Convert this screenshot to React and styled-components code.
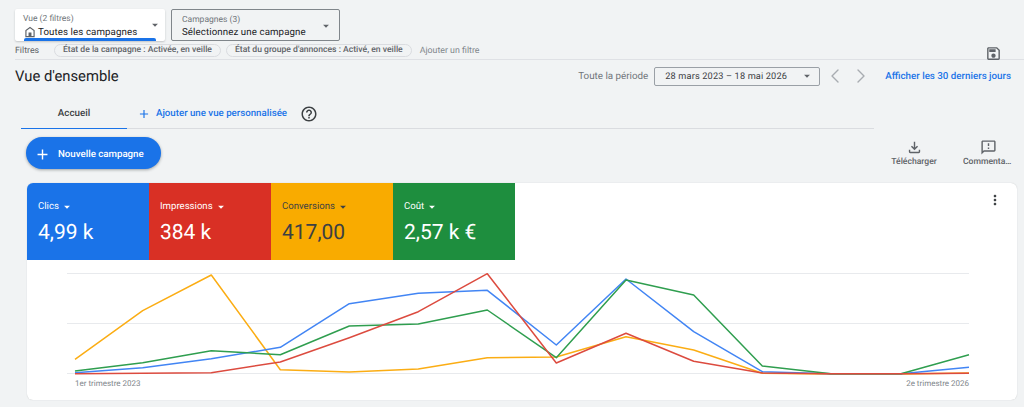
import React from 'react';
import styled, { createGlobalStyle } from 'styled-components';
import { ChevronLeft, ChevronRight } from 'lucide-react';

const CARET = 'M7 10l5 5 5-5z';
const PLUS = 'M19 13h-6v6h-2v-6H5v-2h6V5h2v6h6v2z';
const HOME = 'M12 3L4 9v12h16V9l-8-6zm6 16H6v-9l6-4.5 6 4.5v9zM9.5 13h5v6h-5z';
const HELP = 'M11 18h2v-2h-2v2zm1-16C6.48 2 2 6.48 2 12s4.48 10 10 10 10-4.48 10-10S17.52 2 12 2zm0 18c-4.41 0-8-3.59-8-8s3.59-8 8-8 8 3.59 8 8-3.59 8-8 8zm0-14c-2.21 0-4 1.79-4 4h2c0-1.1.9-2 2-2s2 .9 2 2c0 2-3 1.75-3 5h2c0-2.25 3-2.5 3-5 0-2.21-1.79-4-4-4z';
const SAVE = 'M17 3H5c-1.11 0-2 .9-2 2v14c0 1.1.89 2 2 2h14c1.1 0 2-.9 2-2V7l-4-4zm2 16H5V5h11.17L19 7.83V19zm-7-7c-1.66 0-3 1.34-3 3s1.34 3 3 3 3-1.34 3-3-1.34-3-3-3zM6 6h9v4H6z';
const DOWNLOAD = 'M18 15v3H6v-3H4v3c0 1.1.9 2 2 2h12c1.1 0 2-.9 2-2v-3h-2zm-1-4l-1.41-1.41L13 12.17V4h-2v8.17L8.41 9.59 7 11l5 5 5-5z';
const FEEDBACK = 'M20 2H4c-1.1 0-1.99.9-1.99 2L2 22l4-4h14c1.1 0 2-.9 2-2V4c0-1.1-.9-2-2-2zm0 14H5.17L4 17.17V4h16v12zm-9-4h2v2h-2zm0-6h2v4h-2z';
const MORE = 'M12 8c1.1 0 2-.9 2-2s-.9-2-2-2-2 .9-2 2 .9 2 2 2zm0 2c-1.1 0-2 .9-2 2s.9 2 2 2 2-.9 2-2-.9-2-2-2zm0 6c-1.1 0-2 .9-2 2s.9 2 2 2 2-.9 2-2-.9-2-2-2z';

const GlobalStyle = createGlobalStyle`
  html, body { margin: 0; padding: 0; background: #f1f3f4; }
  body {
    font-family: Roboto, "Liberation Sans", sans-serif;
    color: #3c4043;
    text-rendering: geometricPrecision;
  }
`;

const Page = styled.div`
  width: 1024px;
  height: 407px;
  overflow: hidden;
  display: flex;
  flex-direction: column;
`;

const Svg = styled.svg`
  display: block;
  flex: none;
  fill: currentColor;
`;

function Icon({ d, size = 16, color, className }) {
  return (
    <Svg viewBox="0 0 24 24" width={size} height={size} style={color ? { color } : undefined} className={className}>
      <path d={d} />
    </Svg>
  );
}

const TopBar = styled.div`
  display: flex;
  gap: 6px;
  padding: 9px 0 0 15px;
`;

const Selector = styled.div`
  position: relative;
  box-sizing: border-box;
  height: 32px;
  width: ${p => p.$width}px;
  padding: 5px 0 0 ${p => p.$inset}px;
  border-radius: 2px;
  background: ${p => (p.$active ? '#fff' : 'transparent')};
  border: ${p => (p.$active ? 'none' : '1px solid #80868b')};
  box-shadow: ${p => (p.$active ? '0 1px 2px rgba(60,64,67,.25)' : 'none')};
`;

const SelectorLabel = styled.div`
  font-size: 8.5px;
  line-height: 10px;
  color: #70757a;
`;

const SelectorValue = styled.div`
  display: flex;
  align-items: center;
  gap: 1px;
  margin-top: 1px;
  font-size: 9.7px;
  line-height: 13px;
  color: #202124;
  letter-spacing: 0.1px;
  white-space: nowrap;
`;

const SelectorCaret = styled.div`
  position: absolute;
  top: 9px;
  right: ${p => p.$right}px;
  color: #5f6368;
`;

const ActiveBar = styled.div`
  position: absolute;
  left: 9px;
  right: 9px;
  bottom: 0;
  height: 3px;
  border-radius: 2px 2px 0 0;
  background: #1a73e8;
`;

const FilterRow = styled.div`
  display: flex;
  align-items: center;
  box-sizing: border-box;
  height: 16px;
  margin: 3px 0 0 15px;
  padding-bottom: 2px;
  border-bottom: 1px solid #dfe1e5;
`;

const FilterLabel = styled.span`
  font-size: 8.8px;
  color: #5f6368;
  width: 39px;
`;

const Chip = styled.span`
  box-sizing: border-box;
  height: 13px;
  line-height: 11px;
  margin-right: 5px;
  padding: 0 8px;
  border: 1px solid #dadce0;
  border-radius: 7px;
  font-size: 8.6px;
  font-weight: 500;
  color: #5f6368;
  white-space: nowrap;
`;

const AddFilter = styled.span`
  margin-left: 3px;
  font-size: 8.8px;
  color: #80868b;
`;

const SaveButton = styled.div`
  margin: 5px 22px 0 auto;
  color: #5f6368;
`;

const PeriodRow = styled.div`
  display: flex;
  align-items: center;
  height: 32px;
  padding: 0 13px 0 15px;
`;

const Title = styled.h1`
  margin: 0;
  font-size: 14.8px;
  font-weight: 400;
  color: #202124;
`;

const PeriodLabel = styled.span`
  margin-left: auto;
  font-size: 9.8px;
  color: #70757a;
`;

const DateBox = styled.div`
  display: flex;
  align-items: center;
  justify-content: space-between;
  box-sizing: border-box;
  width: 166px;
  height: 19px;
  margin-left: 6px;
  padding: 0 5px 0 10px;
  border: 1px solid #9aa0a6;
  border-radius: 2px;
  font-size: 9.2px;
  letter-spacing: 0.15px;
  color: #3c4043;
  white-space: nowrap;
`;

const Arrow = styled.div`
  display: flex;
  margin-left: ${p => p.$gap}px;
  color: #a8acb1;
`;

const BlueLink = styled.span`
  font-size: 9.7px;
  font-weight: 500;
  color: #1a73e8;
  white-space: nowrap;
`;

const PeriodLink = styled(BlueLink)`
  margin-left: 12px;
  font-size: 9.78px;
`;

const TabBar = styled.div`
  display: flex;
  align-items: stretch;
  box-sizing: border-box;
  width: 853px;
  height: 32px;
  margin: 5px 0 0 21px;
  padding-top: 2px;
  border-bottom: 1px solid #dadce0;
`;

const Tab = styled.div`
  display: flex;
  align-items: center;
  justify-content: center;
  box-sizing: border-box;
  width: 106px;
  border-bottom: 1px solid #1a73e8;
  margin-bottom: -1px;
  font-size: 9.8px;
  font-weight: 500;
  color: #3c4043;
`;

const AddView = styled.div`
  display: flex;
  align-items: center;
  gap: 5px;
  margin-left: 10px;
  color: #1a73e8;
`;

const HelpButton = styled.div`
  display: flex;
  align-items: center;
  margin-left: 13px;
  color: #3c4043;
`;

const ActionRow = styled.div`
  display: flex;
  align-items: flex-start;
  height: 54px;
  padding-top: 8px;
  box-sizing: border-box;
`;

const NewButton = styled.button`
  display: flex;
  align-items: center;
  gap: 7px;
  box-sizing: border-box;
  width: 135px;
  height: 32px;
  margin-left: 26px;
  padding: 2px 0 0 8px;
  border: none;
  border-radius: 16px;
  background: #1a73e8;
  color: #fff;
  font-family: inherit;
  font-size: 9.7px;
  font-weight: 500;
  white-space: nowrap;
  text-rendering: geometricPrecision;
  box-shadow: 0 1px 3px rgba(60, 64, 67, .45);
`;

const Actions = styled.div`
  display: flex;
  gap: 2px;
  margin-left: auto;
`;

const Action = styled.div`
  box-sizing: border-box;
  width: 72px;
  padding: 2px 11px 0;
  display: flex;
  flex-direction: column;
  align-items: center;
  gap: 1px;
  color: #5f6368;
`;

const ActionText = styled.span`
  display: block;
  width: 100%;
  font-size: 8.6px;
  font-weight: 500;
  line-height: 10px;
  text-align: center;
  white-space: nowrap;
  overflow: hidden;
  text-overflow: ellipsis;
`;

const Card = styled.section`
  box-sizing: border-box;
  height: 217px;
  margin: 0 7px 0 27px;
  border-radius: 6px;
  background: #fff;
  overflow: hidden;
  box-shadow: 0 0 1px rgba(60, 64, 67, .3);
`;

const CardHeader = styled.div`
  display: flex;
  height: 77px;
`;

const Tile = styled.div`
  box-sizing: border-box;
  width: 122px;
  padding: 17px 0 0 11px;
  background: ${p => p.$bg};
  color: ${p => p.$fg};
`;

const TileLabel = styled.div`
  display: flex;
  align-items: center;
  gap: 1px;
  font-size: 9.6px;
  line-height: 14px;
`;

const TileValue = styled.div`
  margin-top: 6px;
  font-size: 21px;
  line-height: 26px;
`;

const MoreButton = styled.div`
  margin: 9px 14px 0 auto;
  color: #3c4043;
`;

const ChartSvg = styled.svg`
  display: block;
`;

const AxisLabels = styled.div`
  display: flex;
  justify-content: space-between;
  width: 894px;
  margin: 0 0 0 48px;
  font-size: 8px;
  color: #80868b;
`;

const series = [
  { color: '#fbad14', points: [[75,359.3],[142.7,310.7],[211.3,275],[280.3,369.7],[349.3,372],[418.3,369],[487.3,357.7],[556.3,357],[626,336.7],[693.7,350],[762.3,373.3],[831,374],[901,374],[969,373]] },
  { color: '#4285f4', points: [[75,372.7],[142.7,367.7],[211.3,358.7],[280.3,347.3],[349.3,303.7],[418.3,293.3],[487.3,290.3],[556.3,345],[626,279],[693.7,331.7],[762.3,371.7],[831,373.7],[901,373.7],[969,367.3]] },
  { color: '#2f9e4f', points: [[75,371],[142.7,362.7],[211.3,350.7],[280.3,354.7],[349.3,326],[418.3,324],[487.3,310],[556.3,357.7],[626,280],[693.7,295],[762.3,366],[831,373.7],[901,373.7],[969,354.7]] },
  { color: '#dc4b3f', points: [[75,373.7],[142.7,373.3],[211.3,372.7],[280.3,362],[349.3,337.7],[418.3,311.7],[487.3,273.7],[556.3,363],[626,333.3],[693.7,361.3],[762.3,373],[831,373.7],[901,373.7],[969,373.3]] },
];

// chart coordinates are page pixels, the viewBox moves them into the card
function Chart() {
  return (
    <ChartSvg width="990" height="119" viewBox="27 260 990 119">
      {[273.5, 323.5, 373.5].map(y => (
        <line key={y} x1="67" x2="969" y1={y} y2={y} stroke="#e8eaed" strokeWidth="1" />
      ))}
      {series.map(s => (
        <polyline
          key={s.color}
          points={s.points.map(p => p.join(',')).join(' ')}
          fill="none"
          stroke={s.color}
          strokeWidth="1.5"
          strokeLinejoin="round"
        />
      ))}
    </ChartSvg>
  );
}

const tiles = [
  { label: 'Clics', value: '4,99 k', bg: '#1a73e8', fg: '#fff' },
  { label: 'Impressions', value: '384 k', bg: '#d93025', fg: '#fff' },
  { label: 'Conversions', value: '417,00', bg: '#f9ab00', fg: '#3c4043' },
  { label: 'Coût', value: '2,57 k €', bg: '#1e8e3e', fg: '#fff' },
];

export default function App() {
  return (
    <Page>
      <GlobalStyle />
      <TopBar>
        <Selector $width={150} $inset={8} $active>
          <SelectorLabel>Vue (2 filtres)</SelectorLabel>
          <SelectorValue>
            <Icon d={HOME} size={14} color="#5f6368" />
            Toutes les campagnes
          </SelectorValue>
          <SelectorCaret $right={3}><Icon d={CARET} size={14} /></SelectorCaret>
          <ActiveBar />
        </Selector>
        <Selector $width={169} $inset={10}>
          <SelectorLabel>Campagnes (3)</SelectorLabel>
          <SelectorValue>Sélectionnez une campagne</SelectorValue>
          <SelectorCaret $right={6}><Icon d={CARET} size={14} /></SelectorCaret>
        </Selector>
      </TopBar>

      <FilterRow>
        <FilterLabel>Filtres</FilterLabel>
        <Chip>État de la campagne : Activée, en veille</Chip>
        <Chip>État du groupe d'annonces : Activé, en veille</Chip>
        <AddFilter>Ajouter un filtre</AddFilter>
        <SaveButton><Icon d={SAVE} size={17} /></SaveButton>
      </FilterRow>

      <PeriodRow>
        <Title>Vue d'ensemble</Title>
        <PeriodLabel>Toute la période</PeriodLabel>
        <DateBox>
          28 mars 2023 – 18 mai 2026
          <Icon d={CARET} size={14} color="#5f6368" />
        </DateBox>
        <Arrow $gap={3}><ChevronLeft size={24} strokeWidth={1.4} /></Arrow>
        <Arrow $gap={2}><ChevronRight size={24} strokeWidth={1.4} /></Arrow>
        <PeriodLink>Afficher les 30 derniers jours</PeriodLink>
      </PeriodRow>

      <TabBar>
        <Tab>Accueil</Tab>
        <AddView>
          <Icon d={PLUS} size={14} />
          <BlueLink>Ajouter une vue personnalisée</BlueLink>
        </AddView>
        <HelpButton><Icon d={HELP} size={18} /></HelpButton>
      </TabBar>

      <ActionRow>
        <NewButton>
          <Icon d={PLUS} size={17} />
          Nouvelle campagne
        </NewButton>
        <Actions>
          <Action>
            <Icon d={DOWNLOAD} size={17} />
            <ActionText>Télécharger</ActionText>
          </Action>
          <Action>
            <Icon d={FEEDBACK} size={17} />
            <ActionText>Commentaires</ActionText>
          </Action>
        </Actions>
      </ActionRow>

      <Card>
        <CardHeader>
          {tiles.map(t => (
            <Tile key={t.label} $bg={t.bg} $fg={t.fg}>
              <TileLabel>
                {t.label}
                <Icon d={CARET} size={14} />
              </TileLabel>
              <TileValue>{t.value}</TileValue>
            </Tile>
          ))}
          <MoreButton><Icon d={MORE} size={16} /></MoreButton>
        </CardHeader>
        <Chart />
        <AxisLabels>
          <span>1er trimestre 2023</span>
          <span>2e trimestre 2026</span>
        </AxisLabels>
      </Card>
    </Page>
  );
}
